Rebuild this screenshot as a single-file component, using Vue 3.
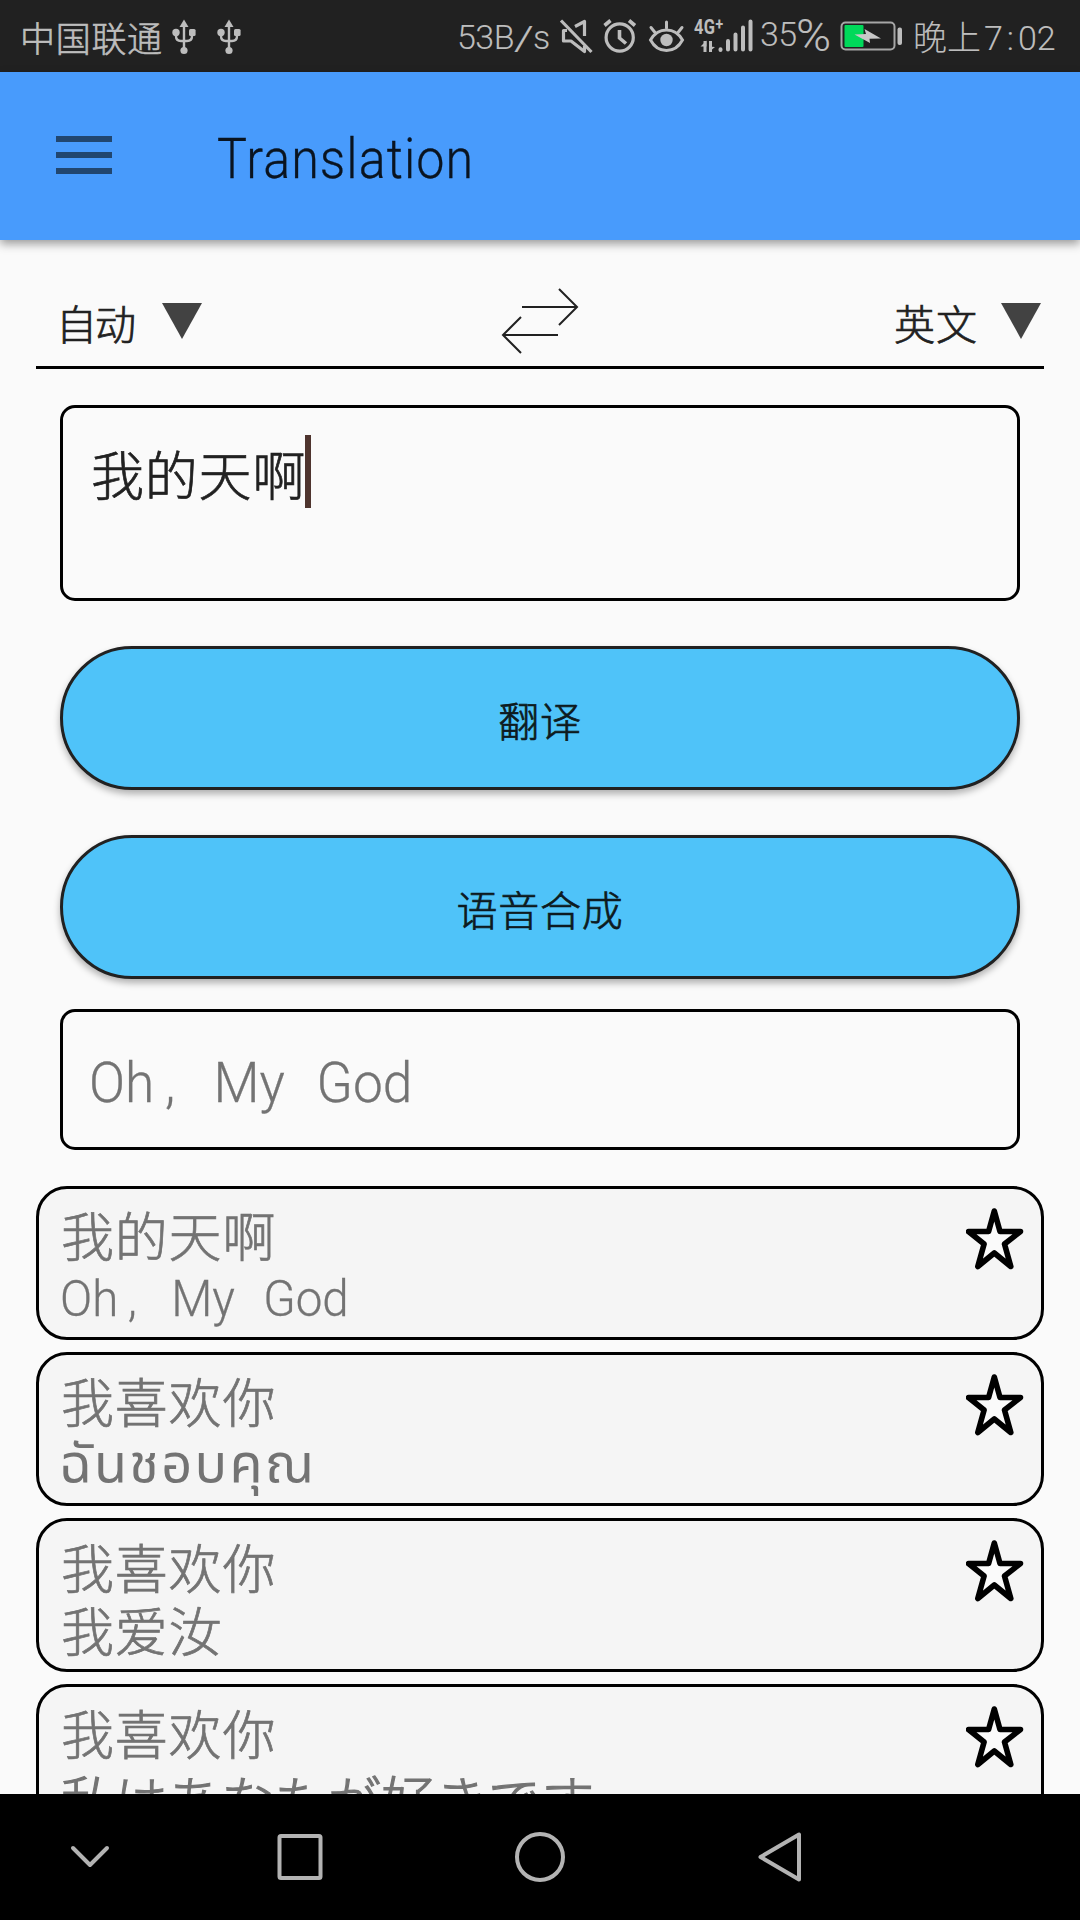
<script setup>
const history = [
  { source: '我的天啊', result: 'Oh, My God', kind: 'latin' },
  { source: '我喜欢你', result: 'ฉันชอบคุณ', kind: 'thai' },
  { source: '我喜欢你', result: '我爱汝', kind: 'han' },
  { source: '我喜欢你', result: '私はあなたが好きです', kind: 'kana' },
]
</script>

<template>
  <div class="screen">
    <header class="status">
      <span class="carrier">中国联通</span>
      <svg v-for="n in 2" :key="n" class="usb" width="24" height="36" viewBox="0 0 24 36">
        <g fill="none" stroke="#bdbdbd" stroke-width="2.4">
          <path d="M12 5V31M4 13v4q0 5 5 5h6q5 0 5-5v-4" />
        </g>
        <g fill="#bdbdbd">
          <path d="M12 .5 16.5 8h-9Z" /><circle cx="4" cy="13.500" r="3.700" />
          <rect x="17" y="10" width="6.600" height="7" rx="1.500" /><circle cx="12" cy="31.500" r="3.600" />
        </g>
      </svg>
      <span class="speed">53B<em>/</em>s</span>
      <svg class="mute" width="34" height="36" viewBox="0 0 34 36" fill="none" stroke="#bdbdbd" stroke-width="3.200" stroke-linejoin="round">
        <path d="M2 2.500 32.500 34" />
        <path d="M16 8.500 25.500 3.500V18M8 12.500H4.500V23H12L25.500 33.500V28" />
      </svg>
      <svg class="alarm" width="34" height="36" viewBox="0 0 34 36" fill="none" stroke="#bdbdbd" stroke-width="3.200">
        <circle cx="16.700" cy="19.500" r="13.600" />
        <path d="M1.500 7.500 7.500 2.500M26 2.500l6 5" stroke-width="3.600" />
        <path d="M16.500 12v8l6.500 5.500" stroke-width="3.600" />
      </svg>
      <svg class="eye" width="38" height="36" viewBox="0 0 38 36" fill="none" stroke="#bdbdbd" stroke-width="3">
        <path d="M2.500 22C10 8.500 27 8.500 34.500 22 27 36 10 36 2.500 22Z" />
        <path d="M18.500 4V10M3 9.500l4 5M34 9.500l-4 5" stroke-linecap="round" />
        <circle cx="18.500" cy="22" r="6.200" fill="#bdbdbd" stroke="none" />
      </svg>
      <div class="signal">
        <div class="net">4G<sup>+</sup></div>
        <svg width="60" height="36" viewBox="0 0 60 36" fill="none" stroke="#bdbdbd" stroke-width="4" stroke-linecap="round">
          <path d="M27.500 30.300v.6M35 22v8.500M42.500 15.500v15M50 8.500v22M57.500 2.500v28" />
          <path d="M12 33V22M17.500 22v11" stroke-width="3" stroke-linecap="butt" />
          <path d="M7.500 27.500 13.500 21.500V27.500ZM16 33V27.500l6 .5Z" fill="#bdbdbd" stroke="none" />
        </svg>
      </div>
      <span class="percent">35<b>%</b></span>
      <svg class="battery" width="64" height="32" viewBox="0 0 64 32">
        <rect x="1.500" y="2.500" width="53" height="27" rx="4" fill="none" stroke="#a6a6a6" stroke-width="2" />
        <rect x="4.500" y="5" width="19" height="22" rx="1" fill="#00d95a" />
        <path d="M14.500 14.500 26 14 24.500 9 41 18.500 29.500 18.700 30 23Z" fill="#c8c8c8" />
        <rect x="57.500" y="7.500" width="4.500" height="17.500" rx="2" fill="#bdbdbd" />
      </svg>
      <span class="clock">晚上<i>7<u>:</u>02</i></span>
    </header>

    <div class="appbar">
      <div class="menu"><span></span><span></span><span></span></div>
      <h1>Translation</h1>
    </div>

    <main>
      <div class="langs">
        <span class="lang from">自动</span>
        <svg class="tri" width="40" height="36" viewBox="0 0 40 36"><path d="M0 0H40L20 36Z" fill="#424242" /></svg>
        <svg class="swap" width="78" height="68" viewBox="0 0 78 68" fill="none" stroke="#212121" stroke-width="2">
          <path d="M21 20H76M58 2 76 20 58 38M57 48H2M20 30 2 48 20 66" />
        </svg>
        <span class="lang to">英文</span>
        <svg class="tri" width="40" height="36" viewBox="0 0 40 36"><path d="M0 0H40L20 36Z" fill="#424242" /></svg>
      </div>

      <div class="input"><span>我的天啊</span><div class="caret"></div></div>
      <button>翻译</button>
      <button>语音合成</button>
      <div class="output"><div class="narrow">Oh<span class="comma">,</span> My God</div></div>

      <ul>
        <li v-for="(item, i) in history" :key="i">
          <div class="texts">
            <div class="source">{{ item.source }}</div>
            <div v-if="item.kind === 'latin'" class="result latin narrow">{{ item.result.split(',')[0] }}<span class="comma">,</span>{{ item.result.split(',')[1] }}</div>
            <div v-else class="result" :class="item.kind">{{ item.result }}</div>
          </div>
          <svg width="58" height="62" viewBox="0 0 58 62">
            <path d="M28.300 3 34 23.500H54.500L38.500 36 44.800 58.500 28.300 45 11.800 58.500 18.100 36 2.500 23.500H22.600Z" fill="#fafafa" stroke="#000" stroke-width="5.600" stroke-linejoin="round" />
          </svg>
        </li>
      </ul>
    </main>

    <nav>
      <svg width="1080" height="126" viewBox="0 0 1080 126" fill="none" stroke="#b3b3b3" stroke-width="4" stroke-linejoin="round" stroke-linecap="round">
        <path d="M73 54 90 71 107 54" />
        <rect x="279.500" y="42" width="41" height="42" rx="1.500" />
        <circle cx="540" cy="63" r="23" />
        <path d="M760.500 63 799 40.500V85.500Z" />
      </svg>
    </nav>
  </div>
</template>

<style>
body { margin: 0; background: #fafafa; }
</style>

<style scoped>
* { box-sizing: border-box; }
.screen {
  width: 1080px; height: 1920px; overflow: hidden; display: flex; flex-direction: column;
  background: #fafafa; color: #212121; white-space: nowrap;
  font-family: Roboto, "Noto Sans CJK SC", sans-serif; font-weight: 300;
  -webkit-text-stroke: .7px currentColor;
}
svg { display: block; flex: none; }
.status { height: 72px; flex: none; background: #212121; color: #bdbdbd; display: flex; align-items: flex-start; padding-left: 20px; -webkit-text-stroke-width: .1px; }
.status > span { line-height: 40px; font-size: 34px; flex: none; }
.status > .carrier { width: 152px; margin-top: 21px; font-size: 35px; letter-spacing: .7px; -webkit-text-stroke-width: .6px; }
.usb { margin: 19px 21px 0 0; }
.speed { width: 101px; margin: 17px 0 0 195px; letter-spacing: -.5px; }
.speed em { font-style: normal; display: inline-block; transform: scaleX(1.5) translateY(1px); margin: 0 3px 0 3px; }
.mute { margin: 18px 0 0 1px; }
.alarm { margin: 18px 0 0 10px; }
.eye { margin: 18px 0 0 11px; }
.signal { width: 60px; height: 36px; margin: 19px 0 0 8px; display: grid; }
.signal > * { grid-area: 1 / 1; }
.net { font: 700 20px/16px "Roboto", sans-serif; transform: scaleX(.82); transform-origin: 0 0; letter-spacing: .5px; }
.net sup { font-size: 17px; line-height: 0; vertical-align: 4px; }
.signal svg { margin-left: -1px; }
.percent { width: 80px; margin: 14px 0 0 6px; letter-spacing: -.5px; }
.percent b { display: inline-block; font-weight: 300; font-size: 44px; line-height: 0; vertical-align: -5px; margin-left: -1px; transform: scaleX(1.08); transform-origin: 0 50%; }
.battery { margin-top: 20px; }
.clock { margin: 18px 0 0 9px; }
.clock i { font-style: normal; margin-left: 3px; }
.clock u { text-decoration: none; margin: 0 4px 0 4px; }
.appbar { height: 168px; flex: none; background: #489bfc; display: flex; align-items: flex-start; padding-left: 56px; box-shadow: 0 4px 9px rgba(0,0,0,.38); position: relative; color: #0a1420; }
.menu { width: 56px; margin-top: 64px; display: grid; gap: 10px; }
.menu span { height: 6px; background: #21466f; }
h1 { margin: 55px 0 0 105px; font-weight: 300; font-size: 56px; line-height: 64px; letter-spacing: 1.200px; transform: scaleX(.896); transform-origin: 0 0; -webkit-text-stroke-width: .3px; }
main { flex: 1; min-height: 0; overflow: hidden; padding: 0 36px; }
.langs { height: 129px; border-bottom: 3px solid #000; display: flex; align-items: flex-start; padding: 0 3px 0 20px; }
.lang { font-size: 41px; line-height: 48px; margin-top: 62px; }
.from { width: 106px; letter-spacing: -2px; }
.to { width: 107px; letter-spacing: 1px; }
.tri { margin-top: 63px; }
.swap { margin: 47px auto 0 299px; }
.input { height: 196px; margin: 36px 24px 0; border: 3px solid #000; border-radius: 15px; display: flex; padding: 27px 0 0 28px; font-size: 53px; line-height: 80px; letter-spacing: .8px; }
.input span { width: 214px; padding-top: 3px; }
.caret { width: 6px; height: 73px; background: #4e342e; }
button { display: block; width: 960px; height: 144px; margin: 45px 24px 0; padding: 2px 0 0; border: 3px solid #212121; border-radius: 72px; background: #4fc3f9; color: #0d1a20; font: inherit; font-size: 41px; letter-spacing: .8px; box-shadow: 0 4px 7px rgba(0,0,0,.3); }
.output { height: 141px; margin: 30px 24px 0; border: 3px solid #000; border-radius: 15px; color: #737373; font-size: 56px; line-height: 64px; padding: 39px 0 0 26px; }
.narrow { transform: scaleX(.95); transform-origin: 0 0; word-spacing: .35em; -webkit-text-stroke-width: .3px; }
.comma { margin: 0 .13em 0 .2em; }
ul { list-style: none; margin: 36px 0 0; padding: 0; display: grid; gap: 12px; }
li { height: 154px; border: 3px solid #000; border-radius: 31px; background: #f5f5f5; color: #737373; display: flex; justify-content: space-between; padding: 19px 17px 0 22px; }
.texts { font-size: 53px; }
.source { height: 63px; line-height: 63px; letter-spacing: .8px; }
.result { height: 63px; line-height: 63px; letter-spacing: .8px; }
.latin { font-size: 50px; line-height: 56px; letter-spacing: 0; margin-left: -1px; }
.thai { font-family: "Noto Sans Thai", "Noto Sans", sans-serif; font-weight: 400; font-size: 54px; letter-spacing: 2.300px; line-height: 58px; margin-left: -2px; -webkit-text-stroke-width: 0; }
.kana { font-family: "Noto Sans CJK JP", sans-serif; letter-spacing: .4px; line-height: 58px; -webkit-text-stroke-width: 1.200px; }
nav { height: 126px; flex: none; background: #000; }
</style>
